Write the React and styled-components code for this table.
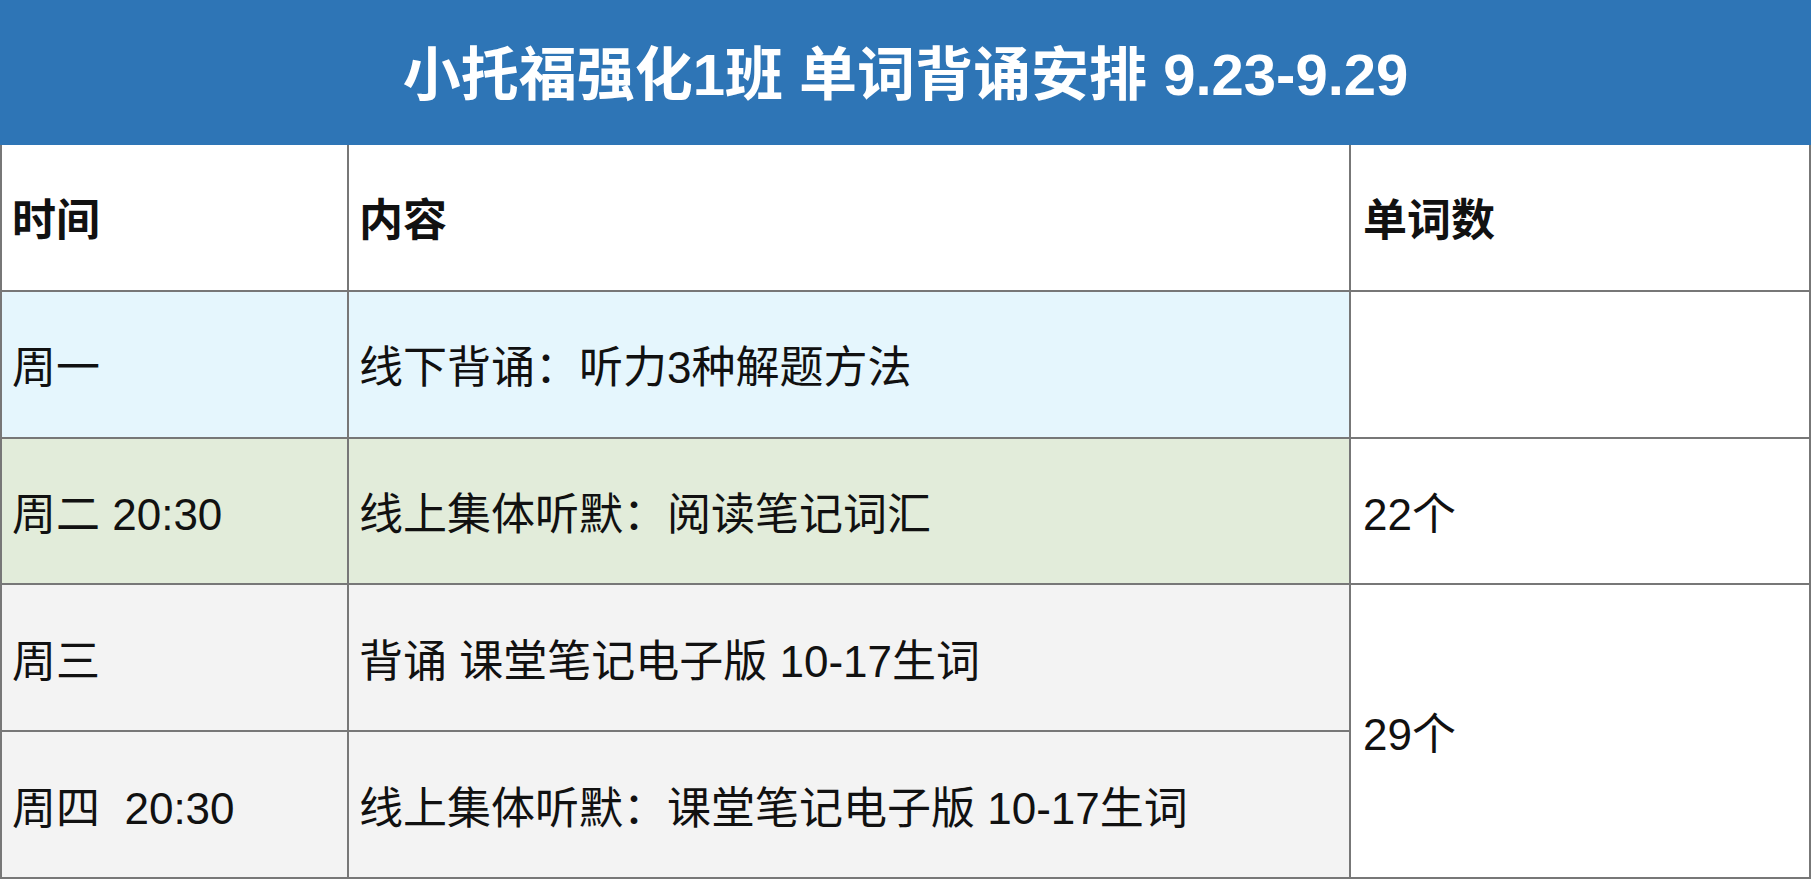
import React from 'react';
import styled, { createGlobalStyle } from 'styled-components'

const GlobalStyle = createGlobalStyle`
  html, body {
    margin: 0;
    padding: 0;
    background: #ffffff;
  }
  body {
    font-family: "Liberation Sans", "Noto Sans CJK SC", sans-serif;
  }
`
const Page = styled.div`
  width: 1811px;
  height: 879px;
  display: flex;
  flex-direction: column;
  overflow: hidden;
`
const TitleBar = styled.div`
  height: 145px;
  background-color: #2e75b6;
  display: flex;
  align-items: center;
  justify-content: center;
  color: #ffffff;
  font-size: 58px;
  font-weight: bold;
  padding-bottom: 6px;
  box-sizing: border-box;
`
const Grid = styled.div`
  flex: 1;
  display: grid;
  grid-template-columns: 345px 1000px 1fr;
  grid-template-rows: repeat(5, 1fr);
  gap: 2px;
  padding: 0 2px 2px 2px;
  background-color: #777777;
`
const Cell = styled.div`
  background-color: ${p => p.bg || '#ffffff'};
  display: flex;
  align-items: center;
  padding-left: ${p => p.pad || 10}px;
  font-size: 44px;
  font-weight: ${p => p.head ? 'bold' : 'normal'};
  color: #111111;
  white-space: pre;
  grid-row: ${p => p.span ? `span ${p.span}` : 'auto'};
`

const rows = [
  { time: '周一', text: '线下背诵：听力3种解题方法', bg: '#e5f6fd', count: '' },
  { time: '周二 20:30', text: '线上集体听默：阅读笔记词汇', bg: '#e2ecda', count: '22个' },
  { time: '周三', text: '背诵 课堂笔记电子版 10-17生词', bg: '#f3f3f3', count: '29个', span: 2 },
  { time: '周四  20:30', text: '线上集体听默：课堂笔记电子版 10-17生词', bg: '#f3f3f3' },
]

export default function App() {
  return (
    <>
      <GlobalStyle />
      <Page>
        <TitleBar>小托福强化1班 单词背诵安排 9.23-9.29</TitleBar>
        <Grid>
          <Cell head>时间</Cell>
          <Cell head>内容</Cell>
          <Cell head pad={12}>单词数</Cell>
          {rows.map((r, i) => (
            <React.Fragment key={i}>
              <Cell bg={r.bg}>{r.time}</Cell>
              <Cell bg={r.bg}>{r.text}</Cell>
              {r.count !== undefined && (
                <Cell pad={12} span={r.span}>{r.count}</Cell>
              )}
            </React.Fragment>
          ))}
        </Grid>
      </Page>
    </>
  )
}
